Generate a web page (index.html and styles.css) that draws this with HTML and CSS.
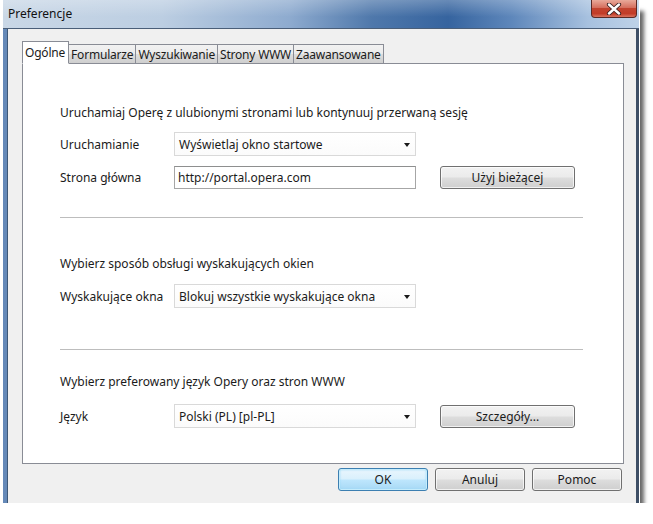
FILE: index.html
```html
<!DOCTYPE html>
<html lang="pl">
<head>
<meta charset="utf-8">
<title>Preferencje</title>
<link rel="stylesheet" href="styles.css">
</head>
<body>
<div class="window">
  <div class="titlebar">
    <span class="title">Preferencje</span>
    <div class="close">
      <svg width="16" height="12" viewBox="0 0 16 12"><path d="M3 1.5 L13 10.5 M13 1.5 L3 10.5" stroke="#3a2020" stroke-width="4.2" stroke-linecap="round"/><path d="M3 1.5 L13 10.5 M13 1.5 L3 10.5" stroke="#ffffff" stroke-width="2.4" stroke-linecap="round"/></svg>
    </div>
  </div>
  <div class="client">
    <div class="tabs">
      <div class="tab active">Ogólne</div>
      <div class="tab">Formularze</div>
      <div class="tab">Wyszukiwanie</div>
      <div class="tab">Strony WWW</div>
      <div class="tab">Zaawansowane</div>
    </div>
    <div class="panel">
      <section class="group g1">
        <p class="heading">Uruchamiaj Operę z ulubionymi stronami lub kontynuuj przerwaną sesję</p>
        <div class="row r1">
          <span class="label">Uruchamianie</span>
          <div class="select">Wyświetlaj okno startowe<span class="arrow"></span></div>
        </div>
        <div class="row r2">
          <span class="label">Strona główna</span>
          <div class="input">http://portal.opera.com</div>
          <button class="btn side">Użyj bieżącej</button>
        </div>
      </section>
      <div class="sep s1"></div>
      <section class="group g2">
        <p class="heading">Wybierz sposób obsługi wyskakujących okien</p>
        <div class="row">
          <span class="label">Wyskakujące okna</span>
          <div class="select">Blokuj wszystkie wyskakujące okna<span class="arrow"></span></div>
        </div>
      </section>
      <div class="sep s2"></div>
      <section class="group g3">
        <p class="heading">Wybierz preferowany język Opery oraz stron WWW</p>
        <div class="row">
          <span class="label">Język</span>
          <div class="select">Polski (PL) [pl-PL]<span class="arrow"></span></div>
          <button class="btn side">Szczegóły...</button>
        </div>
      </section>
    </div>
    <div class="footer">
      <button class="btn dlg default">OK</button>
      <button class="btn dlg">Anuluj</button>
      <button class="btn dlg">Pomoc</button>
    </div>
  </div>
</div>
</body>
</html>
```
FILE: styles.css
```css
html, body {
  margin: 0;
  padding: 0;
  background: #ffffff;
}
body {
  font-family: "Segoe UI", "Noto Sans", "DejaVu Sans", sans-serif;
  font-size: 12px;
  color: #1b1b1b;
}
.window {
  margin-left: 3px;
  width: 636px;
  height: 503px;
  display: flex;
  flex-direction: column;
  background: #f0f0f0;
  box-shadow: 1px 5px 0 0 #ffffff, 5px 11px 4px rgba(0, 0, 0, 0.6);
  position: relative;
}
.titlebar {
  height: 28px;
  flex: none;
  display: flex;
  align-items: center;
  padding-left: 5px;
  background:
    linear-gradient(to bottom, rgba(255,255,255,0.25), rgba(255,255,255,0) 60%),
    linear-gradient(to right, #c9d7e6 0%, #bccee2 25%, #8eabcf 45%, #4f78ab 58%, #36649f 70%, #5e87bb 80%, #a7c1df 92%, #bed2e8 100%);
  border-bottom: 1px solid #4a5e78;
  position: relative;
}
.title {
  color: #111;
  font-size: 12px;
  margin-top: -1px;
}
.close {
  position: absolute;
  top: 0;
  right: 2px;
  width: 46px;
  height: 18px;
  border: 1px solid #5a2a26;
  border-top: none;
  border-radius: 0 0 4px 4px;
  background: linear-gradient(to bottom, #e9a99a 0%, #d56f5e 45%, #c2432f 50%, #c23c28 80%, #d9735f 100%);
  display: flex;
  align-items: center;
  justify-content: center;
  box-sizing: border-box;
}
.client {
  flex: 1;
  display: flex;
  flex-direction: column;
  border-left: 4px solid #6589b8;
  border-right: 3px solid #3e4f66;
  padding: 12px 12px 12px 15px;
  box-shadow: inset 1px 0 0 #3e5878;
}
.tabs {
  display: flex;
  align-items: flex-end;
  height: 23px;
  margin-bottom: -1px;
  position: relative;
  z-index: 1;
}
.tab {
  height: 20px;
  line-height: 19px;
  padding: 0 2px;
  box-sizing: border-box;
  border: 1px solid #898c95;
  border-left: none;
  letter-spacing: -0.2px;
  background: linear-gradient(to bottom, #f2f2f2 0%, #ebebeb 50%, #dddddd 51%, #cfcfcf 100%);
}
.tab.active {
  height: 23px;
  line-height: 21px;
  background: #ffffff;
  border-left: 1px solid #898c95;
  border-bottom: 1px solid #ffffff;
  padding: 0 3px 0 2px;
}
.panel {
  width: 602px;
  height: 401px;
  box-sizing: border-box;
  border: 1px solid #898c95;
  background: #ffffff;
  padding: 0 40px 0 37px;
}
.group p.heading {
  margin: 0;
  line-height: 16px;
}
.g1 { padding-top: 41px; }
.g2 { padding-top: 38px; }
.g3 { padding-top: 24px; }
.row {
  display: flex;
  align-items: center;
}
.label {
  width: 114px;
  flex: none;
}
.g1 .r1 { margin-top: 11px; }
.g1 .r2 { margin-top: 10px; }
.g2 .row { margin-top: 12px; }
.g3 .row { margin-top: 14px; }
.select {
  width: 242px;
  height: 24px;
  box-sizing: border-box;
  border: 1px solid #d9d9d9;
  background: linear-gradient(to bottom, #ffffff, #fbfbfb);
  display: flex;
  align-items: center;
  padding-left: 4px;
  position: relative;
}
.arrow {
  position: absolute;
  right: 5px;
  top: 10px;
  width: 0;
  height: 0;
  border-left: 3.5px solid transparent;
  border-right: 3.5px solid transparent;
  border-top: 4px solid #1a1a1a;
}
.input {
  width: 242px;
  height: 23px;
  box-sizing: border-box;
  border: 1px solid #a6a6a6;
  border-top-color: #8e8f8f;
  display: flex;
  align-items: center;
  padding-left: 3px;
}
.btn {
  font-family: inherit;
  font-size: 12px;
  color: #1b1b1b;
  height: 23px;
  border: 1px solid #707070;
  border-radius: 3px;
  background: linear-gradient(to bottom, #f2f2f2 0%, #ebebeb 48%, #dddddd 52%, #cfcfcf 100%);
  box-shadow: inset 0 0 0 1px rgba(255,255,255,0.7);
  padding: 0;
  margin: 0;
}
.btn.side {
  width: 135px;
  margin-left: 24px;
}
.g3 .btn.side { margin-top: 1px; }
.sep {
  height: 1px;
  background: #bdbdbd;
}
.s1 { margin-top: 28px; }
.s2 { margin-top: 41px; }
.footer {
  display: flex;
  justify-content: flex-end;
  gap: 7px;
  margin-top: 4px;
  padding-right: 2px;
}
.btn.dlg {
  width: 90px;
}
.btn.default {
  border-color: #3c7fb1;
  background: linear-gradient(to bottom, #eaf6fd 0%, #d9f0fc 48%, #bee6fd 52%, #a7d9f5 100%);
  box-shadow: inset 0 0 0 1px #c5ecfc, inset 0 0 2px 1px #98d8f5;
}
```
